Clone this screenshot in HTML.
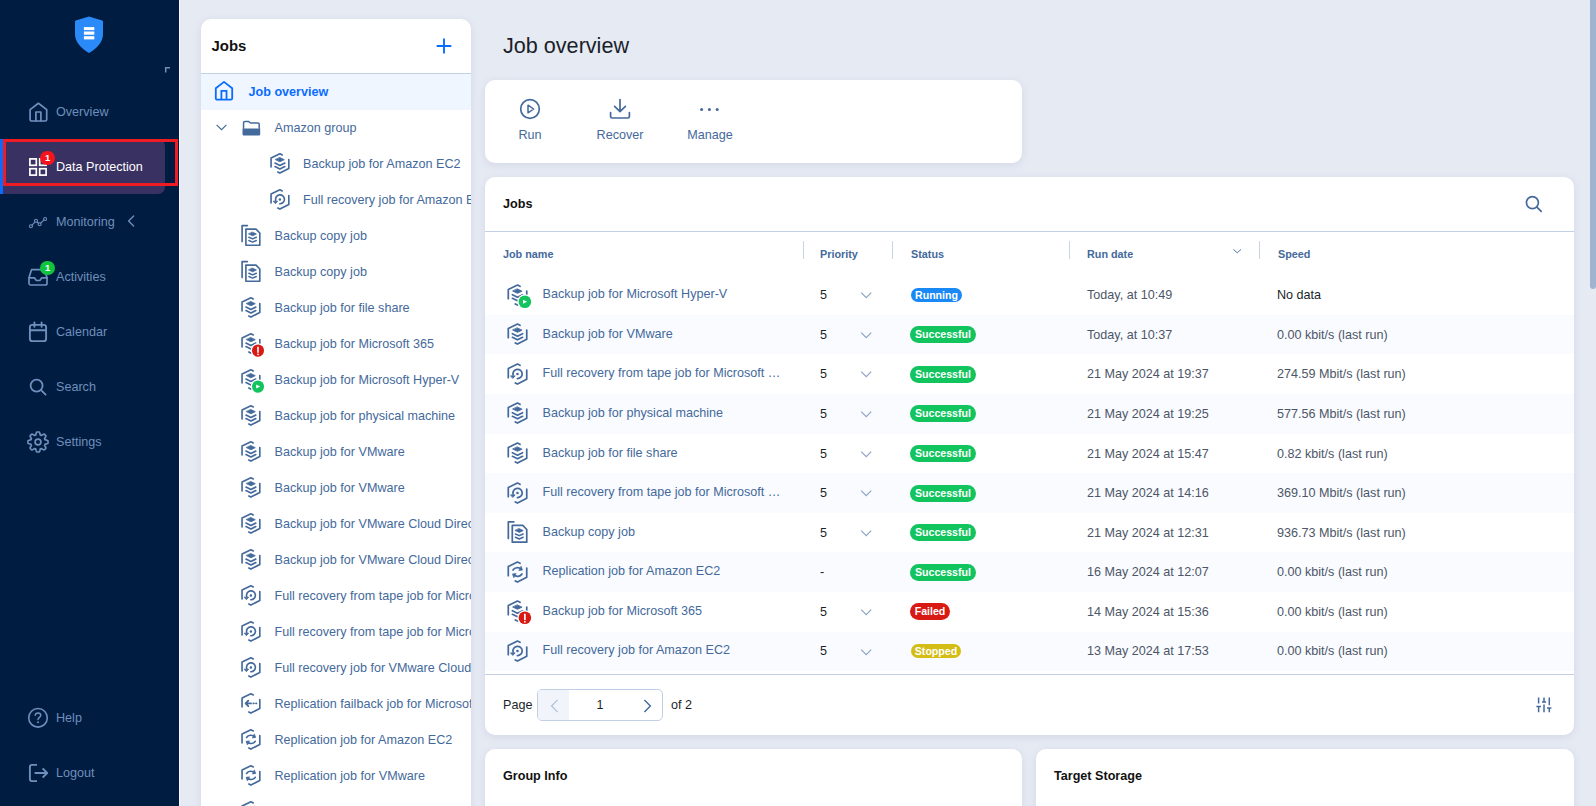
<!DOCTYPE html>
<html lang="en"><head><meta charset="utf-8"><title>Job overview</title>
<style>
*{box-sizing:border-box}
html,body{margin:0;padding:0}
body{width:1596px;height:806px;overflow:hidden;position:relative;background:#e6eaf3;font-family:"Liberation Sans",Arial,sans-serif;font-size:12.6px;color:#44699b}
.abs{position:absolute}
#side{position:absolute;left:0;top:0;width:179px;height:806px;background:#001c40}
#sideline{position:absolute;left:179px;top:0;width:1px;height:806px;background:#f4f6fa}
.nav{position:absolute;left:56px;color:#6f8fbd;font-size:12.6px;line-height:16px;white-space:nowrap}
.ni{position:absolute;fill:none;stroke:#6f8fbd;stroke-width:1.7;stroke-linecap:round;stroke-linejoin:round;overflow:visible}
.card{position:absolute;background:#fff;border-radius:10px;box-shadow:0 2px 8px rgba(120,135,170,.18)}
.ji{position:absolute;fill:none;stroke:#44699b;stroke-width:1.65;stroke-linecap:round;stroke-linejoin:round;overflow:visible;color:#44699b}
.tl{position:absolute;white-space:nowrap;line-height:16px;color:#44699b}
.th{position:absolute;top:246.5px;font-size:10.8px;font-weight:bold;line-height:14px;color:#44699b;white-space:nowrap}
.sep{position:absolute;top:241px;width:1px;height:18px;background:#c9d3e3}
.row{position:absolute;left:485px;width:1089px;height:39.6px}
.row.alt{background:#f9fbff}
.c{position:absolute;white-space:nowrap;line-height:16px;top:11.3px}
.b{position:absolute;color:#fff;font-weight:bold;font-size:10.6px;line-height:14px;text-align:center;border-radius:9px;white-space:nowrap}
.chev{position:absolute;fill:none;stroke:#8ea3c4;stroke-width:1.2}
.nav,.tl,.t1{margin-top:1px}
</style></head><body>

<div id="side">
<svg class="abs" style="left:64px;top:10px" width="50" height="50" viewBox="0 0 50 50"><path d="M25 6.6 38.2 10.4C38.8 10.6 39 11 39 11.6V24C39 32 33 38.5 25 42.9 17 38.5 11 32 11 24V11.6C11 11 11.2 10.6 11.8 10.4Z" fill="#2a8af8"/><rect x="19.9" y="17.1" width="10.4" height="3" fill="#fff"/><rect x="19.9" y="21.5" width="10.4" height="3.2" fill="#fff"/><rect x="19.9" y="26.2" width="10.4" height="3.2" fill="#fff"/></svg>
<svg class="ni" style="left:160px;top:62px;stroke-width:1.5;stroke-linecap:butt;stroke-linejoin:miter" width="16" height="16" viewBox="0 0 16 16"><path d="M5.7 10.6V5.7H10"/></svg>
<div class="abs" style="left:0;top:139px;width:165px;height:55px;background:#3a3163;border-radius:0 7px 7px 0"></div>
<div class="abs" style="left:0;top:139px;width:2.5px;height:55px;background:#0a6cff"></div>
<div class="abs" style="left:3px;top:139px;width:175px;height:47px;border:3px solid #f01c24"></div>
<svg class="ni" style="left:26px;top:100px" width="24" height="24" viewBox="0 0 24 24"><path d="M4.1 9.6 12.4 3.3 20.7 9.6V19.4C20.7 20.4 20 21 19.1 21H5.7C4.8 21 4.1 20.4 4.1 19.4Z"/><path d="M9.9 21V12H14.9V21"/></svg>
<div class="nav" style="top:103px">Overview</div>
<svg class="ni" style="left:26px;top:155px;stroke:#fff;stroke-linejoin:miter" width="24" height="24" viewBox="0 0 24 24"><rect x="3.9" y="3.9" width="6.4" height="6.4"/><rect x="13.7" y="3.9" width="6.4" height="6.4"/><rect x="3.9" y="13.7" width="6.4" height="6.4"/><rect x="13.7" y="13.7" width="6.4" height="6.4"/></svg>
<div class="abs" style="left:40.4px;top:150.8px;width:14.4px;height:14.4px;border-radius:50%;background:#f5141e;color:#fff;font-size:9.4px;font-weight:bold;line-height:14.4px;text-align:center">1</div>
<div class="nav" style="top:158px;color:#fff">Data Protection</div>
<svg class="ni" style="left:26px;top:210px;stroke-width:1.1" width="24" height="24" viewBox="0 0 24 24"><path d="M6.1 15.1 8.8 12.1M11 12.2 12.6 13.3M14.8 13 17.9 10.2"/><circle cx="4.9" cy="16.3" r="1.5"/><circle cx="10" cy="10.8" r="1.5"/><circle cx="13.6" cy="14.3" r="1.5"/><circle cx="19.1" cy="9" r="1.5"/></svg>
<div class="nav" style="top:213px">Monitoring</div>
<svg class="ni" style="left:124px;top:213px;stroke-width:1.4" width="16" height="16" viewBox="0 0 16 16"><path d="M9.6 3 4.6 8 9.6 13"/></svg>
<svg class="ni" style="left:26px;top:265px" width="24" height="24" viewBox="0 0 24 24"><path d="M5.6 4.6H18.4L21 12.6V18.2C21 19.3 20.3 20 19.2 20H4.8C3.7 20 3 19.3 3 18.2V12.6Z"/><path d="M3 12.8H8.4L10.4 15.5H13.8L15.8 12.8H21"/></svg>
<div class="abs" style="left:40.2px;top:260.8px;width:14.6px;height:14.6px;border-radius:50%;background:#10c43e;color:#fff;font-size:9.4px;font-weight:bold;line-height:14.6px;text-align:center">1</div>
<div class="nav" style="top:268px">Activities</div>
<svg class="ni" style="left:26px;top:320px;stroke-width:1.9" width="24" height="24" viewBox="0 0 24 24"><rect x="3.9" y="4.9" width="16.2" height="16.2" rx="2.4"/><path d="M3.9 10.2H20.1M8.4 2.4V6.8M15.6 2.4V6.8"/></svg>
<div class="nav" style="top:323px">Calendar</div>
<svg class="ni" style="left:26px;top:375px;stroke-width:1.8" width="24" height="24" viewBox="0 0 24 24"><circle cx="10.6" cy="10.6" r="6"/><path d="M15.1 15.1 19.6 19.6"/></svg>
<div class="nav" style="top:378px">Search</div>
<svg class="ni" style="left:26px;top:430px;stroke-width:1.7" width="24" height="24" viewBox="0 0 24 24"><path d="M12.00 2.00 L12.33 2.01 L12.65 2.02 L12.98 2.05 L13.31 2.09 L13.56 2.55 L13.77 3.12 L13.94 3.69 L14.08 4.23 L14.21 4.71 L14.35 5.09 L14.57 5.17 L14.79 5.26 L15.01 5.35 L15.23 5.45 L15.59 5.28 L16.02 5.03 L16.50 4.76 L17.03 4.47 L17.58 4.21 L18.09 4.07 L18.34 4.27 L18.59 4.48 L18.84 4.70 L19.07 4.93 L19.30 5.16 L19.52 5.41 L19.73 5.66 L19.93 5.91 L19.79 6.42 L19.53 6.97 L19.24 7.50 L18.97 7.98 L18.72 8.41 L18.55 8.77 L18.65 8.99 L18.74 9.21 L18.83 9.43 L18.91 9.65 L19.29 9.79 L19.77 9.92 L20.31 10.06 L20.88 10.23 L21.45 10.44 L21.91 10.69 L21.95 11.02 L21.98 11.35 L21.99 11.67 L22.00 12.00 L21.99 12.33 L21.98 12.65 L21.95 12.98 L21.91 13.31 L21.45 13.56 L20.88 13.77 L20.31 13.94 L19.77 14.08 L19.29 14.21 L18.91 14.35 L18.83 14.57 L18.74 14.79 L18.65 15.01 L18.55 15.23 L18.72 15.59 L18.97 16.02 L19.24 16.50 L19.53 17.03 L19.79 17.58 L19.93 18.09 L19.73 18.34 L19.52 18.59 L19.30 18.84 L19.07 19.07 L18.84 19.30 L18.59 19.52 L18.34 19.73 L18.09 19.93 L17.58 19.79 L17.03 19.53 L16.50 19.24 L16.02 18.97 L15.59 18.72 L15.23 18.55 L15.01 18.65 L14.79 18.74 L14.57 18.83 L14.35 18.91 L14.21 19.29 L14.08 19.77 L13.94 20.31 L13.77 20.88 L13.56 21.45 L13.31 21.91 L12.98 21.95 L12.65 21.98 L12.33 21.99 L12.00 22.00 L11.67 21.99 L11.35 21.98 L11.02 21.95 L10.69 21.91 L10.44 21.45 L10.23 20.88 L10.06 20.31 L9.92 19.77 L9.79 19.29 L9.65 18.91 L9.43 18.83 L9.21 18.74 L8.99 18.65 L8.77 18.55 L8.41 18.72 L7.98 18.97 L7.50 19.24 L6.97 19.53 L6.42 19.79 L5.91 19.93 L5.66 19.73 L5.41 19.52 L5.16 19.30 L4.93 19.07 L4.70 18.84 L4.48 18.59 L4.27 18.34 L4.07 18.09 L4.21 17.58 L4.47 17.03 L4.76 16.50 L5.03 16.02 L5.28 15.59 L5.45 15.23 L5.35 15.01 L5.26 14.79 L5.17 14.57 L5.09 14.35 L4.71 14.21 L4.23 14.08 L3.69 13.94 L3.12 13.77 L2.55 13.56 L2.09 13.31 L2.05 12.98 L2.02 12.65 L2.01 12.33 L2.00 12.00 L2.01 11.67 L2.02 11.35 L2.05 11.02 L2.09 10.69 L2.55 10.44 L3.12 10.23 L3.69 10.06 L4.23 9.92 L4.71 9.79 L5.09 9.65 L5.17 9.43 L5.26 9.21 L5.35 8.99 L5.45 8.77 L5.28 8.41 L5.03 7.98 L4.76 7.50 L4.47 6.97 L4.21 6.42 L4.07 5.91 L4.27 5.66 L4.48 5.41 L4.70 5.16 L4.93 4.93 L5.16 4.70 L5.41 4.48 L5.66 4.27 L5.91 4.07 L6.42 4.21 L6.97 4.47 L7.50 4.76 L7.98 5.03 L8.41 5.28 L8.77 5.45 L8.99 5.35 L9.21 5.26 L9.43 5.17 L9.65 5.09 L9.79 4.71 L9.92 4.23 L10.06 3.69 L10.23 3.12 L10.44 2.55 L10.69 2.09 L11.02 2.05 L11.35 2.02 L11.67 2.01Z"/><circle cx="12" cy="12" r="2.9"/></svg>
<div class="nav" style="top:433px">Settings</div>
<svg class="ni" style="left:26px;top:706px;stroke-width:1.6" width="24" height="24" viewBox="0 0 24 24"><circle cx="12" cy="11.8" r="9.3"/><path d="M9.2 9.2C9.4 7.6 10.6 6.9 12 6.9 13.6 6.9 14.8 7.9 14.8 9.3 14.8 11.3 12 11.4 12 13.6" stroke-width="1.5"/><circle cx="12" cy="16.3" r="1" fill="#6f8fbd" stroke="none"/></svg>
<div class="nav" style="top:709px">Help</div>
<svg class="ni" style="left:26px;top:761px;stroke-width:1.9;stroke-linecap:butt" width="24" height="24" viewBox="0 0 24 24"><path d="M11 3.9H5.9C4.7 3.9 3.9 4.7 3.9 5.9V18.1C3.9 19.3 4.7 20.1 5.9 20.1H11"/><path d="M8.6 12H20.8M16.6 7.4 21.2 12 16.6 16.6"/></svg>
<div class="nav" style="top:764px">Logout</div>
</div><div id="sideline"></div>
<div class="card" style="left:201px;top:19px;width:270px;height:800px;border-radius:10px 10px 0 0;overflow:hidden">
<div class="abs" style="left:10.5px;top:18px;font-size:14.9px;font-weight:bold;color:#111;line-height:18px">Jobs</div>
<svg class="abs" style="left:235px;top:18.5px;stroke:#0a6cff;stroke-width:1.9;fill:none;stroke-linecap:round" width="16" height="16" viewBox="0 0 16 16"><path d="M8 1.2V14.8M1.4 8H14.6"/></svg>
<div class="abs" style="left:0;top:54px;width:270px;height:1px;background:#c3d0e2"></div>
<div class="abs" style="left:0;top:55px;width:270px;height:36px;background:#f0f6ff"></div>
<svg class="abs" style="left:11px;top:60.3px;fill:none;stroke:#0a6cff;stroke-width:1.8;stroke-linejoin:round" width="24" height="24" viewBox="0 0 24 24"><path d="M3.8 9.3 12 2.9 20.2 9.3V19.3C20.2 20.2 19.6 20.7 18.8 20.7H5.2C4.4 20.7 3.8 20.2 3.8 19.3Z"/><path d="M9.4 20.7V11.9H14.5V20.7" stroke-linejoin="miter"/></svg>
<div class="tl" style="left:47.5px;top:64px;color:#0a6cff;font-weight:bold">Job overview</div>
<svg class="chev" style="left:12px;top:100px;stroke:#44699b;stroke-width:1.2" width="16" height="16" viewBox="0 0 16 16"><path d="M3.6 5.9 8.5 10.6 13.4 5.9"/></svg>
<svg class="abs" style="left:37.8px;top:96.8px;fill:none;stroke:#44699b;stroke-width:1.5;stroke-linejoin:round" width="24" height="24" viewBox="0 0 24 24"><path d="M4.55 12.8V6.7C4.55 5.9 5 5.4 5.8 5.4H9.4L11.5 7H18.9C19.7 7 20.2 7.5 20.2 8.3V12.8"/><path d="M3.5 12.6H21.2V17.9C21.2 18.9 20.5 19.5 19.6 19.5H5.1C4.2 19.5 3.5 18.9 3.5 17.9Z" fill="#44699b" stroke="none"/></svg>
<div class="tl" style="left:73.5px;top:100px">Amazon group</div>
<svg class="ji" style="left:64.00px;top:129.00px" width="30.00" height="30.00" viewBox="0 0 30 30"><path d="M17.3 7 14.9 5.8 6.05 10.1V18.9M23.8 11.6V20.4L14.9 25.1 12.8 24"/><path d="M14.9 9.6 19.3 11.7 14.9 13.8 10.5 11.7Z" fill="currentColor" stroke-width=".8"/><path d="M10 15.1 14.9 17.5 19.8 15.1M10 18.6 14.9 21 19.8 18.6"/></svg>
<div class="tl" style="left:102px;top:136px">Backup job for Amazon EC2</div>
<svg class="ji" style="left:64.00px;top:165.00px" width="30.00" height="30.00" viewBox="0 0 30 30"><path d="M17.3 7 14.9 5.8 6.05 10.1V18.9M23.8 11.6V20.4L14.9 25.1 12.8 24"/><path d="M10.65 16.3A4.45 4.45 0 1 1 14.8 19.75"/><path d="M8.6 17.2H12.6L10.6 19.4Z" fill="currentColor" stroke-width=".9"/><circle cx="14.9" cy="15.4" r="1.25" fill="currentColor" stroke="none"/></svg>
<div class="tl" style="left:102px;top:172px">Full recovery job for Amazon EC2</div>
<svg class="ji" style="left:35.00px;top:201.00px" width="30.00" height="30.00" viewBox="0 0 30 30"><path d="M11.4 5.6H6.1V21.6M9.9 9.1H20L23.8 13V25.2H9.9Z"/><path d="M16.6 12.2 20.4 14 16.6 15.8 12.8 14Z" fill="currentColor" stroke-width=".8"/><path d="M12.9 17.3 16.6 18.9 20.3 17.3M12.9 20.5 16.6 22.1 20.3 20.5" stroke-width="1.5"/></svg>
<div class="tl" style="left:73.5px;top:208px">Backup copy job</div>
<svg class="ji" style="left:35.00px;top:237.00px" width="30.00" height="30.00" viewBox="0 0 30 30"><path d="M11.4 5.6H6.1V21.6M9.9 9.1H20L23.8 13V25.2H9.9Z"/><path d="M16.6 12.2 20.4 14 16.6 15.8 12.8 14Z" fill="currentColor" stroke-width=".8"/><path d="M12.9 17.3 16.6 18.9 20.3 17.3M12.9 20.5 16.6 22.1 20.3 20.5" stroke-width="1.5"/></svg>
<div class="tl" style="left:73.5px;top:244px">Backup copy job</div>
<svg class="ji" style="left:35.00px;top:273.00px" width="30.00" height="30.00" viewBox="0 0 30 30"><path d="M17.3 7 14.9 5.8 6.05 10.1V18.9M23.8 11.6V20.4L14.9 25.1 12.8 24"/><path d="M14.9 9.6 19.3 11.7 14.9 13.8 10.5 11.7Z" fill="currentColor" stroke-width=".8"/><path d="M10 15.1 14.9 17.5 19.8 15.1M10 18.6 14.9 21 19.8 18.6"/></svg>
<div class="tl" style="left:73.5px;top:280px">Backup job for file share</div>
<svg class="ji" style="left:35.00px;top:309.00px" width="30.00" height="30.00" viewBox="0 0 30 30"><path d="M17.3 7 14.9 5.8 6.05 10.1V18.9M23.8 11.6V20.4L14.9 25.1 12.8 24"/><path d="M14.9 9.6 19.3 11.7 14.9 13.8 10.5 11.7Z" fill="currentColor" stroke-width=".8"/><path d="M10 15.1 14.9 17.5 19.8 15.1M10 18.6 14.9 21 19.8 18.6"/><circle cx="22" cy="22.6" r="7.3" fill="#fff" stroke="none"/><circle cx="22" cy="22.6" r="6.05" fill="#d91a14" stroke="none"/><path d="M22 18.70V24.70" stroke="#fff" stroke-width="1.6" stroke-linecap="butt"/><circle cx="22" cy="26.35" r=".85" fill="#fff" stroke="none"/></svg>
<div class="tl" style="left:73.5px;top:316px">Backup job for Microsoft 365</div>
<svg class="ji" style="left:35.00px;top:345.00px" width="30.00" height="30.00" viewBox="0 0 30 30"><path d="M17.3 7 14.9 5.8 6.05 10.1V18.9M23.8 11.6V20.4L14.9 25.1 12.8 24"/><path d="M14.9 9.6 19.3 11.7 14.9 13.8 10.5 11.7Z" fill="currentColor" stroke-width=".8"/><path d="M10 15.1 14.9 17.5 19.8 15.1M10 18.6 14.9 21 19.8 18.6"/><circle cx="22" cy="22.6" r="7.3" fill="#fff" stroke="none"/><circle cx="22" cy="22.6" r="6.05" fill="#12c45e" stroke="none"/><path d="M20.20 20.60 24.20 22.6 20.20 24.60Z" fill="#fff" stroke="none"/></svg>
<div class="tl" style="left:73.5px;top:352px">Backup job for Microsoft Hyper-V</div>
<svg class="ji" style="left:35.00px;top:381.00px" width="30.00" height="30.00" viewBox="0 0 30 30"><path d="M17.3 7 14.9 5.8 6.05 10.1V18.9M23.8 11.6V20.4L14.9 25.1 12.8 24"/><path d="M14.9 9.6 19.3 11.7 14.9 13.8 10.5 11.7Z" fill="currentColor" stroke-width=".8"/><path d="M10 15.1 14.9 17.5 19.8 15.1M10 18.6 14.9 21 19.8 18.6"/></svg>
<div class="tl" style="left:73.5px;top:388px">Backup job for physical machine</div>
<svg class="ji" style="left:35.00px;top:417.00px" width="30.00" height="30.00" viewBox="0 0 30 30"><path d="M17.3 7 14.9 5.8 6.05 10.1V18.9M23.8 11.6V20.4L14.9 25.1 12.8 24"/><path d="M14.9 9.6 19.3 11.7 14.9 13.8 10.5 11.7Z" fill="currentColor" stroke-width=".8"/><path d="M10 15.1 14.9 17.5 19.8 15.1M10 18.6 14.9 21 19.8 18.6"/></svg>
<div class="tl" style="left:73.5px;top:424px">Backup job for VMware</div>
<svg class="ji" style="left:35.00px;top:453.00px" width="30.00" height="30.00" viewBox="0 0 30 30"><path d="M17.3 7 14.9 5.8 6.05 10.1V18.9M23.8 11.6V20.4L14.9 25.1 12.8 24"/><path d="M14.9 9.6 19.3 11.7 14.9 13.8 10.5 11.7Z" fill="currentColor" stroke-width=".8"/><path d="M10 15.1 14.9 17.5 19.8 15.1M10 18.6 14.9 21 19.8 18.6"/></svg>
<div class="tl" style="left:73.5px;top:460px">Backup job for VMware</div>
<svg class="ji" style="left:35.00px;top:489.00px" width="30.00" height="30.00" viewBox="0 0 30 30"><path d="M17.3 7 14.9 5.8 6.05 10.1V18.9M23.8 11.6V20.4L14.9 25.1 12.8 24"/><path d="M14.9 9.6 19.3 11.7 14.9 13.8 10.5 11.7Z" fill="currentColor" stroke-width=".8"/><path d="M10 15.1 14.9 17.5 19.8 15.1M10 18.6 14.9 21 19.8 18.6"/></svg>
<div class="tl" style="left:73.5px;top:496px">Backup job for VMware Cloud Director</div>
<svg class="ji" style="left:35.00px;top:525.00px" width="30.00" height="30.00" viewBox="0 0 30 30"><path d="M17.3 7 14.9 5.8 6.05 10.1V18.9M23.8 11.6V20.4L14.9 25.1 12.8 24"/><path d="M14.9 9.6 19.3 11.7 14.9 13.8 10.5 11.7Z" fill="currentColor" stroke-width=".8"/><path d="M10 15.1 14.9 17.5 19.8 15.1M10 18.6 14.9 21 19.8 18.6"/></svg>
<div class="tl" style="left:73.5px;top:532px">Backup job for VMware Cloud Director</div>
<svg class="ji" style="left:35.00px;top:561.00px" width="30.00" height="30.00" viewBox="0 0 30 30"><path d="M17.3 7 14.9 5.8 6.05 10.1V18.9M23.8 11.6V20.4L14.9 25.1 12.8 24"/><path d="M10.65 16.3A4.45 4.45 0 1 1 14.8 19.75"/><path d="M8.6 17.2H12.6L10.6 19.4Z" fill="currentColor" stroke-width=".9"/><circle cx="14.9" cy="15.4" r="1.25" fill="currentColor" stroke="none"/></svg>
<div class="tl" style="left:73.5px;top:568px">Full recovery from tape job for Microsoft Hyper-V</div>
<svg class="ji" style="left:35.00px;top:597.00px" width="30.00" height="30.00" viewBox="0 0 30 30"><path d="M17.3 7 14.9 5.8 6.05 10.1V18.9M23.8 11.6V20.4L14.9 25.1 12.8 24"/><path d="M10.65 16.3A4.45 4.45 0 1 1 14.8 19.75"/><path d="M8.6 17.2H12.6L10.6 19.4Z" fill="currentColor" stroke-width=".9"/><circle cx="14.9" cy="15.4" r="1.25" fill="currentColor" stroke="none"/></svg>
<div class="tl" style="left:73.5px;top:604px">Full recovery from tape job for Microsoft Hyper-V</div>
<svg class="ji" style="left:35.00px;top:633.00px" width="30.00" height="30.00" viewBox="0 0 30 30"><path d="M17.3 7 14.9 5.8 6.05 10.1V18.9M23.8 11.6V20.4L14.9 25.1 12.8 24"/><path d="M10.65 16.3A4.45 4.45 0 1 1 14.8 19.75"/><path d="M8.6 17.2H12.6L10.6 19.4Z" fill="currentColor" stroke-width=".9"/><circle cx="14.9" cy="15.4" r="1.25" fill="currentColor" stroke="none"/></svg>
<div class="tl" style="left:73.5px;top:640px">Full recovery job for VMware Cloud Director</div>
<svg class="ji" style="left:35.00px;top:669.00px" width="30.00" height="30.00" viewBox="0 0 30 30"><path d="M17.3 7 14.9 5.8 6.05 10.1V18.9M23.8 11.6V20.4L14.9 25.1 12.8 24"/><path d="M15 15.4H9.9M12.3 12.6 9.6 15.4 12.3 18.2" stroke-width="1.8"/><circle cx="17.4" cy="15.4" r=".95" fill="currentColor" stroke="none"/><circle cx="20.3" cy="15.4" r=".95" fill="currentColor" stroke="none"/><path d="M17.4 15.4H20.3" stroke-width=".6"/></svg>
<div class="tl" style="left:73.5px;top:676px">Replication failback job for Microsoft Hyper-V</div>
<svg class="ji" style="left:35.00px;top:705.00px" width="30.00" height="30.00" viewBox="0 0 30 30"><path d="M17.3 7 14.9 5.8 6.05 10.1V18.9M23.8 11.6V20.4L14.9 25.1 12.8 24"/><path d="M10.6 13.5C12.2 10.7 16.4 10.7 18.4 12.6"/><path d="M18.5 10.2 19.7 13.5 16.6 13.9Z" fill="currentColor" stroke-width=".7"/><path d="M19.2 17.3C17.6 20.1 13.4 20.1 11.4 18.2"/><path d="M11.3 20.6 10.1 17.3 13.2 16.9Z" fill="currentColor" stroke-width=".7"/></svg>
<div class="tl" style="left:73.5px;top:712px">Replication job for Amazon EC2</div>
<svg class="ji" style="left:35.00px;top:741.00px" width="30.00" height="30.00" viewBox="0 0 30 30"><path d="M17.3 7 14.9 5.8 6.05 10.1V18.9M23.8 11.6V20.4L14.9 25.1 12.8 24"/><path d="M10.6 13.5C12.2 10.7 16.4 10.7 18.4 12.6"/><path d="M18.5 10.2 19.7 13.5 16.6 13.9Z" fill="currentColor" stroke-width=".7"/><path d="M19.2 17.3C17.6 20.1 13.4 20.1 11.4 18.2"/><path d="M11.3 20.6 10.1 17.3 13.2 16.9Z" fill="currentColor" stroke-width=".7"/></svg>
<div class="tl" style="left:73.5px;top:748px">Replication job for VMware</div>
<svg class="ji" style="left:35.00px;top:777.00px" width="30.00" height="30.00" viewBox="0 0 30 30"><path d="M17.3 7 14.9 5.8 6.05 10.1V18.9M23.8 11.6V20.4L14.9 25.1 12.8 24"/><path d="M10.6 13.5C12.2 10.7 16.4 10.7 18.4 12.6"/><path d="M18.5 10.2 19.7 13.5 16.6 13.9Z" fill="currentColor" stroke-width=".7"/><path d="M19.2 17.3C17.6 20.1 13.4 20.1 11.4 18.2"/><path d="M11.3 20.6 10.1 17.3 13.2 16.9Z" fill="currentColor" stroke-width=".7"/></svg>
<div class="tl" style="left:73.5px;top:784px">Replication job for VMware Cloud Director</div>
</div>
<div class="abs" style="left:503px;top:33px;font-size:21.6px;line-height:26px;color:#1b1f2a;white-space:nowrap">Job overview</div>
<div class="card" style="left:485px;top:80px;width:537px;height:83px">
<svg class="abs" style="left:33px;top:17px;fill:none;stroke:#44699b;stroke-width:1.7;stroke-linejoin:round" width="24" height="24" viewBox="0 0 24 24"><circle cx="12" cy="12" r="9.3"/><path d="M10 8.2 15.7 12 10 15.8Z" stroke-width="1.5"/></svg>
<div class="tl" style="left:0;top:46px;width:90px;text-align:center">Run</div>
<svg class="abs" style="left:123px;top:17px;fill:none;stroke:#44699b;stroke-width:1.7;stroke-linecap:round;stroke-linejoin:round" width="24" height="24" viewBox="0 0 24 24"><path d="M12 2.6V14.4M6.6 9.4 12 14.6 17.4 9.4M2.6 15.6V19.4C2.6 20.4 3.2 21 4.2 21H19.8C20.8 21 21.4 20.4 21.4 19.4V15.6"/></svg>
<div class="tl" style="left:90px;top:46px;width:90px;text-align:center">Recover</div>
<svg class="abs" style="left:213px;top:17px;fill:#44699b" width="24" height="24" viewBox="0 0 24 24"><circle cx="3.6" cy="12.6" r="1.5"/><circle cx="11.4" cy="12.6" r="1.5"/><circle cx="19.2" cy="12.6" r="1.5"/></svg>
<div class="tl" style="left:180px;top:46px;width:90px;text-align:center">Manage</div>
</div>
<div class="card" style="left:485px;top:177px;width:1089px;height:558px"></div>
<div class="abs" style="left:503px;top:196px;font-weight:bold;color:#111;line-height:16px">Jobs</div>
<svg class="abs" style="left:1522px;top:192px;fill:none;stroke:#44699b;stroke-width:1.7;stroke-linecap:round" width="24" height="24" viewBox="0 0 24 24"><circle cx="10.4" cy="10.6" r="6"/><path d="M14.9 15.1 19.2 19.4"/></svg>
<div class="abs" style="left:485px;top:231px;width:1089px;height:1px;background:#c3cfe2"></div>
<div class="th" style="left:503px">Job name</div>
<div class="th" style="left:820px">Priority</div>
<div class="th" style="left:911px">Status</div>
<div class="th" style="left:1087px">Run date</div>
<div class="th" style="left:1278px">Speed</div>
<div class="sep" style="left:802.5px"></div>
<div class="sep" style="left:892px"></div>
<div class="sep" style="left:1069px"></div>
<div class="sep" style="left:1259px"></div>
<svg class="chev" style="left:1229px;top:243px;stroke:#5577a8;stroke-width:1" width="16" height="16" viewBox="0 0 16 16"><path d="M4.4 6.4 8.2 9.8 12 6.4"/></svg>
<div class="row" style="top:275px;height:40px">
<svg class="ji" style="left:16.90px;top:4.30px" width="31.20" height="31.20" viewBox="0 0 30 30"><path d="M17.3 7 14.9 5.8 6.05 10.1V18.9M23.8 11.6V20.4L14.9 25.1 12.8 24"/><path d="M14.9 9.6 19.3 11.7 14.9 13.8 10.5 11.7Z" fill="currentColor" stroke-width=".8"/><path d="M10 15.1 14.9 17.5 19.8 15.1M10 18.6 14.9 21 19.8 18.6"/><circle cx="22" cy="21.9" r="7.3" fill="#fff" stroke="none"/><circle cx="22" cy="21.9" r="6.05" fill="#12c45e" stroke="none"/><path d="M20.20 19.90 24.20 21.9 20.20 23.90Z" fill="#fff" stroke="none"/></svg>
<div class="c" style="left:57.5px;top:11.00px">Backup job for Microsoft Hyper-V</div>
<div class="c" style="left:335px;top:12.00px;color:#1b1f2a">5</div>
<svg class="chev" style="left:373px;top:12px" width="16" height="16" viewBox="0 0 16 16"><path d="M3.2 5.6 8.2 10.6 13.2 5.6"/></svg>
<div class="b" style="left:426.0px;top:13px;width:51px;height:14px;line-height:14px;background:#1a88f5">Running</div>
<div class="c" style="left:602px;top:12.00px;color:#4d5667">Today, at 10:49</div>
<div class="c" style="left:792px;top:12.00px;color:#1b1f2a">No data</div>
</div>
<div class="row alt" style="top:315px;height:39px">
<svg class="ji" style="left:16.90px;top:3.30px" width="31.20" height="31.20" viewBox="0 0 30 30"><path d="M17.3 7 14.9 5.8 6.05 10.1V18.9M23.8 11.6V20.4L14.9 25.1 12.8 24"/><path d="M14.9 9.6 19.3 11.7 14.9 13.8 10.5 11.7Z" fill="currentColor" stroke-width=".8"/><path d="M10 15.1 14.9 17.5 19.8 15.1M10 18.6 14.9 21 19.8 18.6"/></svg>
<div class="c" style="left:57.5px;top:11.00px">Backup job for VMware</div>
<div class="c" style="left:335px;top:12.00px;color:#1b1f2a">5</div>
<svg class="chev" style="left:373px;top:12px" width="16" height="16" viewBox="0 0 16 16"><path d="M3.2 5.6 8.2 10.6 13.2 5.6"/></svg>
<div class="b" style="left:424.8px;top:11px;width:66.4px;height:17px;line-height:17px;background:#12c45e">Successful</div>
<div class="c" style="left:602px;top:12.00px;color:#4d5667">Today, at 10:37</div>
<div class="c" style="left:792px;top:12.00px;color:#4d5667">0.00 kbit/s (last run)</div>
</div>
<div class="row" style="top:354px;height:40px">
<svg class="ji" style="left:16.90px;top:4.30px" width="31.20" height="31.20" viewBox="0 0 30 30"><path d="M17.3 7 14.9 5.8 6.05 10.1V18.9M23.8 11.6V20.4L14.9 25.1 12.8 24"/><path d="M10.65 16.3A4.45 4.45 0 1 1 14.8 19.75"/><path d="M8.6 17.2H12.6L10.6 19.4Z" fill="currentColor" stroke-width=".9"/><circle cx="14.9" cy="15.4" r="1.25" fill="currentColor" stroke="none"/></svg>
<div class="c" style="left:57.5px;top:11.00px">Full recovery from tape job for Microsoft …</div>
<div class="c" style="left:335px;top:12.00px;color:#1b1f2a">5</div>
<svg class="chev" style="left:373px;top:12px" width="16" height="16" viewBox="0 0 16 16"><path d="M3.2 5.6 8.2 10.6 13.2 5.6"/></svg>
<div class="b" style="left:424.8px;top:12px;width:66.4px;height:17px;line-height:17px;background:#12c45e">Successful</div>
<div class="c" style="left:602px;top:12.00px;color:#4d5667">21 May 2024 at 19:37</div>
<div class="c" style="left:792px;top:12.00px;color:#4d5667">274.59 Mbit/s (last run)</div>
</div>
<div class="row alt" style="top:394px;height:40px">
<svg class="ji" style="left:16.90px;top:3.30px" width="31.20" height="31.20" viewBox="0 0 30 30"><path d="M17.3 7 14.9 5.8 6.05 10.1V18.9M23.8 11.6V20.4L14.9 25.1 12.8 24"/><path d="M14.9 9.6 19.3 11.7 14.9 13.8 10.5 11.7Z" fill="currentColor" stroke-width=".8"/><path d="M10 15.1 14.9 17.5 19.8 15.1M10 18.6 14.9 21 19.8 18.6"/></svg>
<div class="c" style="left:57.5px;top:11.00px">Backup job for physical machine</div>
<div class="c" style="left:335px;top:12.00px;color:#1b1f2a">5</div>
<svg class="chev" style="left:373px;top:12px" width="16" height="16" viewBox="0 0 16 16"><path d="M3.2 5.6 8.2 10.6 13.2 5.6"/></svg>
<div class="b" style="left:424.8px;top:11px;width:66.4px;height:17px;line-height:17px;background:#12c45e">Successful</div>
<div class="c" style="left:602px;top:12.00px;color:#4d5667">21 May 2024 at 19:25</div>
<div class="c" style="left:792px;top:12.00px;color:#4d5667">577.56 Mbit/s (last run)</div>
</div>
<div class="row" style="top:434px;height:39px">
<svg class="ji" style="left:16.90px;top:3.30px" width="31.20" height="31.20" viewBox="0 0 30 30"><path d="M17.3 7 14.9 5.8 6.05 10.1V18.9M23.8 11.6V20.4L14.9 25.1 12.8 24"/><path d="M14.9 9.6 19.3 11.7 14.9 13.8 10.5 11.7Z" fill="currentColor" stroke-width=".8"/><path d="M10 15.1 14.9 17.5 19.8 15.1M10 18.6 14.9 21 19.8 18.6"/></svg>
<div class="c" style="left:57.5px;top:11.00px">Backup job for file share</div>
<div class="c" style="left:335px;top:12.00px;color:#1b1f2a">5</div>
<svg class="chev" style="left:373px;top:12px" width="16" height="16" viewBox="0 0 16 16"><path d="M3.2 5.6 8.2 10.6 13.2 5.6"/></svg>
<div class="b" style="left:424.8px;top:11px;width:66.4px;height:17px;line-height:17px;background:#12c45e">Successful</div>
<div class="c" style="left:602px;top:12.00px;color:#4d5667">21 May 2024 at 15:47</div>
<div class="c" style="left:792px;top:12.00px;color:#4d5667">0.82 kbit/s (last run)</div>
</div>
<div class="row alt" style="top:473px;height:40px">
<svg class="ji" style="left:16.90px;top:4.30px" width="31.20" height="31.20" viewBox="0 0 30 30"><path d="M17.3 7 14.9 5.8 6.05 10.1V18.9M23.8 11.6V20.4L14.9 25.1 12.8 24"/><path d="M10.65 16.3A4.45 4.45 0 1 1 14.8 19.75"/><path d="M8.6 17.2H12.6L10.6 19.4Z" fill="currentColor" stroke-width=".9"/><circle cx="14.9" cy="15.4" r="1.25" fill="currentColor" stroke="none"/></svg>
<div class="c" style="left:57.5px;top:11.00px">Full recovery from tape job for Microsoft …</div>
<div class="c" style="left:335px;top:12.00px;color:#1b1f2a">5</div>
<svg class="chev" style="left:373px;top:12px" width="16" height="16" viewBox="0 0 16 16"><path d="M3.2 5.6 8.2 10.6 13.2 5.6"/></svg>
<div class="b" style="left:424.8px;top:12px;width:66.4px;height:17px;line-height:17px;background:#12c45e">Successful</div>
<div class="c" style="left:602px;top:12.00px;color:#4d5667">21 May 2024 at 14:16</div>
<div class="c" style="left:792px;top:12.00px;color:#4d5667">369.10 Mbit/s (last run)</div>
</div>
<div class="row" style="top:513px;height:39px">
<svg class="ji" style="left:16.90px;top:3.30px" width="31.20" height="31.20" viewBox="0 0 30 30"><path d="M11.4 5.6H6.1V21.6M9.9 9.1H20L23.8 13V25.2H9.9Z"/><path d="M16.6 12.2 20.4 14 16.6 15.8 12.8 14Z" fill="currentColor" stroke-width=".8"/><path d="M12.9 17.3 16.6 18.9 20.3 17.3M12.9 20.5 16.6 22.1 20.3 20.5" stroke-width="1.5"/></svg>
<div class="c" style="left:57.5px;top:11.00px">Backup copy job</div>
<div class="c" style="left:335px;top:12.00px;color:#1b1f2a">5</div>
<svg class="chev" style="left:373px;top:12px" width="16" height="16" viewBox="0 0 16 16"><path d="M3.2 5.6 8.2 10.6 13.2 5.6"/></svg>
<div class="b" style="left:424.8px;top:11px;width:66.4px;height:17px;line-height:17px;background:#12c45e">Successful</div>
<div class="c" style="left:602px;top:12.00px;color:#4d5667">21 May 2024 at 12:31</div>
<div class="c" style="left:792px;top:12.00px;color:#4d5667">936.73 Mbit/s (last run)</div>
</div>
<div class="row alt" style="top:552px;height:40px">
<svg class="ji" style="left:16.90px;top:4.30px" width="31.20" height="31.20" viewBox="0 0 30 30"><path d="M17.3 7 14.9 5.8 6.05 10.1V18.9M23.8 11.6V20.4L14.9 25.1 12.8 24"/><path d="M10.6 13.5C12.2 10.7 16.4 10.7 18.4 12.6"/><path d="M18.5 10.2 19.7 13.5 16.6 13.9Z" fill="currentColor" stroke-width=".7"/><path d="M19.2 17.3C17.6 20.1 13.4 20.1 11.4 18.2"/><path d="M11.3 20.6 10.1 17.3 13.2 16.9Z" fill="currentColor" stroke-width=".7"/></svg>
<div class="c" style="left:57.5px;top:11.00px">Replication job for Amazon EC2</div>
<div class="c" style="left:335px;top:12.00px;color:#1b1f2a">-</div>
<div class="b" style="left:424.8px;top:12px;width:66.4px;height:17px;line-height:17px;background:#12c45e">Successful</div>
<div class="c" style="left:602px;top:12.00px;color:#4d5667">16 May 2024 at 12:07</div>
<div class="c" style="left:792px;top:12.00px;color:#4d5667">0.00 kbit/s (last run)</div>
</div>
<div class="row" style="top:592px;height:40px">
<svg class="ji" style="left:16.90px;top:3.30px" width="31.20" height="31.20" viewBox="0 0 30 30"><path d="M17.3 7 14.9 5.8 6.05 10.1V18.9M23.8 11.6V20.4L14.9 25.1 12.8 24"/><path d="M14.9 9.6 19.3 11.7 14.9 13.8 10.5 11.7Z" fill="currentColor" stroke-width=".8"/><path d="M10 15.1 14.9 17.5 19.8 15.1M10 18.6 14.9 21 19.8 18.6"/><circle cx="22" cy="21.9" r="7.3" fill="#fff" stroke="none"/><circle cx="22" cy="21.9" r="6.05" fill="#d91a14" stroke="none"/><path d="M22 18.00V24.00" stroke="#fff" stroke-width="1.6" stroke-linecap="butt"/><circle cx="22" cy="25.65" r=".85" fill="#fff" stroke="none"/></svg>
<div class="c" style="left:57.5px;top:11.00px">Backup job for Microsoft 365</div>
<div class="c" style="left:335px;top:12.00px;color:#1b1f2a">5</div>
<svg class="chev" style="left:373px;top:12px" width="16" height="16" viewBox="0 0 16 16"><path d="M3.2 5.6 8.2 10.6 13.2 5.6"/></svg>
<div class="b" style="left:424.8px;top:11px;width:40.4px;height:17px;line-height:17px;background:#d91a14">Failed</div>
<div class="c" style="left:602px;top:12.00px;color:#4d5667">14 May 2024 at 15:36</div>
<div class="c" style="left:792px;top:12.00px;color:#4d5667">0.00 kbit/s (last run)</div>
</div>
<div class="row alt" style="top:632px;height:39px">
<svg class="ji" style="left:16.90px;top:3.30px" width="31.20" height="31.20" viewBox="0 0 30 30"><path d="M17.3 7 14.9 5.8 6.05 10.1V18.9M23.8 11.6V20.4L14.9 25.1 12.8 24"/><path d="M10.65 16.3A4.45 4.45 0 1 1 14.8 19.75"/><path d="M8.6 17.2H12.6L10.6 19.4Z" fill="currentColor" stroke-width=".9"/><circle cx="14.9" cy="15.4" r="1.25" fill="currentColor" stroke="none"/></svg>
<div class="c" style="left:57.5px;top:10.00px">Full recovery job for Amazon EC2</div>
<div class="c" style="left:335px;top:11.00px;color:#1b1f2a">5</div>
<svg class="chev" style="left:373px;top:12px" width="16" height="16" viewBox="0 0 16 16"><path d="M3.2 5.6 8.2 10.6 13.2 5.6"/></svg>
<div class="b" style="left:425.8px;top:12px;width:50.4px;height:14px;line-height:14px;background:#d4bd14">Stopped</div>
<div class="c" style="left:602px;top:11.00px;color:#4d5667">13 May 2024 at 17:53</div>
<div class="c" style="left:792px;top:11.00px;color:#4d5667">0.00 kbit/s (last run)</div>
</div>
<div class="abs" style="left:485px;top:674px;width:1089px;height:1px;background:#c3cfe2"></div>
<div class="abs" style="left:503px;top:697px;color:#1b1f2a;line-height:16px">Page</div>
<div class="abs" style="left:537px;top:689px;width:126px;height:32px;border:1px solid #c0cfe5;border-radius:5px;background:#fff;overflow:hidden"><div class="abs" style="left:0;top:0;width:31px;height:30px;background:#f1f5fb"></div></div>
<svg class="chev" style="left:546px;top:697px;stroke:#b4c2d8;stroke-width:1.3" width="16" height="16" viewBox="0 0 16 16"><path d="M11.6 2.9 5.6 9 11.6 15.1"/></svg>
<svg class="chev" style="left:639px;top:697px;stroke:#44699b;stroke-width:1.4" width="16" height="16" viewBox="0 0 16 16"><path d="M5.4 2.9 11.4 9 5.4 15.1"/></svg>
<div class="abs" style="left:570px;top:697px;width:60px;text-align:center;color:#1b1f2a;line-height:16px">1</div>
<div class="abs" style="left:671px;top:697px;color:#1b1f2a;line-height:16px">of 2</div>
<svg class="abs" style="left:1532px;top:692px;fill:none;stroke:#44699b;stroke-width:1.5" width="24" height="24" viewBox="0 0 24 24"><path d="M6.6 5.6V11.6M4.4 14.4H9M6.6 14.4V20.3M12 5.6V9.9M10 9.9H14.1M12 12.6V20.3M17.3 5.6V13.3M15 16H19.4M17.3 16V20.3"/></svg>
<div class="card" style="left:485px;top:749px;width:537px;height:80px;border-radius:10px 10px 0 0"></div>
<div class="abs" style="left:503px;top:768px;font-weight:bold;color:#111;line-height:16px">Group Info</div>
<div class="card" style="left:1036px;top:749px;width:538px;height:80px;border-radius:10px 10px 0 0"></div>
<div class="abs" style="left:1054px;top:768px;font-weight:bold;color:#111;line-height:16px">Target Storage</div>
<div class="abs" style="left:1590px;top:0;width:6px;height:289px;background:#a0b4d0;border-radius:0 0 3px 3px"></div>
</body></html>
